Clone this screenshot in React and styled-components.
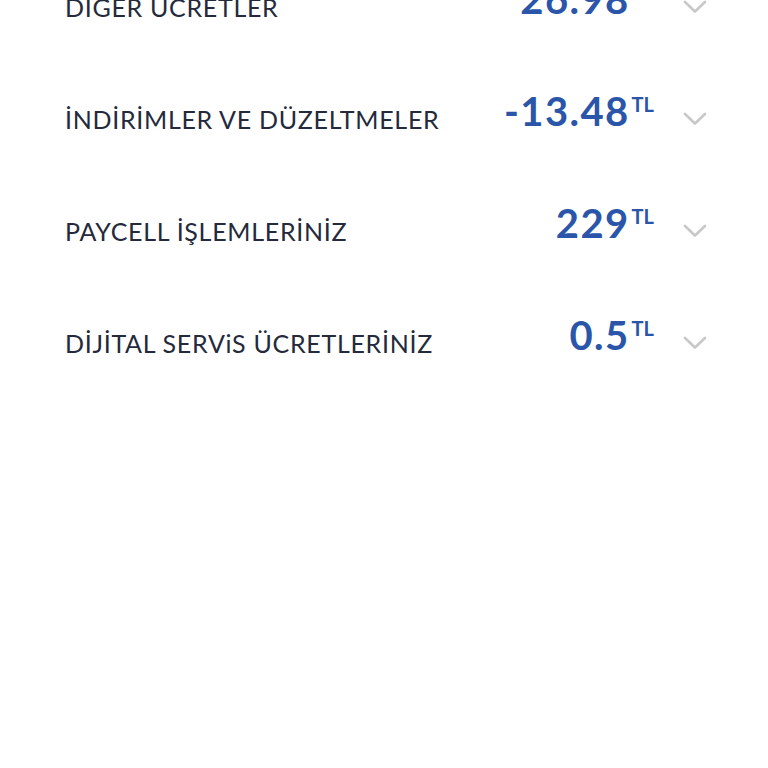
import React from 'react';
import styled, { createGlobalStyle } from 'styled-components';

const GlobalStyle = createGlobalStyle`
    html, body {
        margin: 0;
        padding: 0;
        background: #ffffff;
    }
    body {
        font-family: Lato, "Noto Sans", sans-serif;
        -webkit-font-smoothing: antialiased;
    }
`;

// sayfa kaydırılmış halde, ilk satır yarıda kesik
const Page = styled.div`
    width: 768px;
    height: 768px;
    overflow: hidden;
    background: #ffffff;
`;

const List = styled.ul`
    list-style: none;
    margin: -49px 0 0;
    padding: 0;
`;

const Row = styled.li`
    height: 112px;
    display: flex;
    align-items: center;
    padding: 0 60px 0 65px;
    box-sizing: border-box;
`;

const Label = styled.span`
    flex: 1;
    font-size: 25px;
    font-weight: 400;
    letter-spacing: 0.7px;
    color: #242a3b;
    white-space: nowrap;
    padding-bottom: 1px;
`;

const Amount = styled.span`
    display: flex;
    align-items: flex-start;
    color: #2a55a9;
    margin-bottom: 17px;
`;

const Value = styled.span`
    font-size: 40px;
    font-weight: 700;
    line-height: 40px;
    letter-spacing: 1.4px;
`;

const Currency = styled.span`
    font-size: 20px;
    font-weight: 700;
    line-height: 20px;
    margin-left: 2px;
    margin-top: 3px;
`;

const Toggle = styled.button`
    border: 0;
    background: none;
    padding: 0;
    margin-left: 28px;
    width: 26px;
    height: 26px;
    display: flex;
    align-items: center;
    justify-content: center;
    cursor: pointer;
`;

const Chevron = () => (
    <svg width="24" height="14" viewBox="0 0 24 14" fill="none">
        <path d="M2 2 L12 11.5 L22 2" stroke="#c8c8c8" strokeWidth="2.6" strokeLinecap="round" strokeLinejoin="round" />
    </svg>
);

const items = [
    { label: 'DİĞER ÜCRETLER', value: '26.98' },
    { label: 'İNDİRİMLER VE DÜZELTMELER', value: '-13.48' },
    { label: 'PAYCELL İŞLEMLERİNİZ', value: '229' },
    { label: 'DİJİTAL SERViS ÜCRETLERİNİZ', value: '0.5' },
];

const App = () => (
    <Page>
        <GlobalStyle />
        <List>
            {items.map((item) => (
                <Row key={item.label}>
                    <Label>{item.label}</Label>
                    <Amount>
                        <Value>{item.value}</Value>
                        <Currency>TL</Currency>
                    </Amount>
                    <Toggle aria-label="Detay">
                        <Chevron />
                    </Toggle>
                </Row>
            ))}
        </List>
    </Page>
);

export default App;
